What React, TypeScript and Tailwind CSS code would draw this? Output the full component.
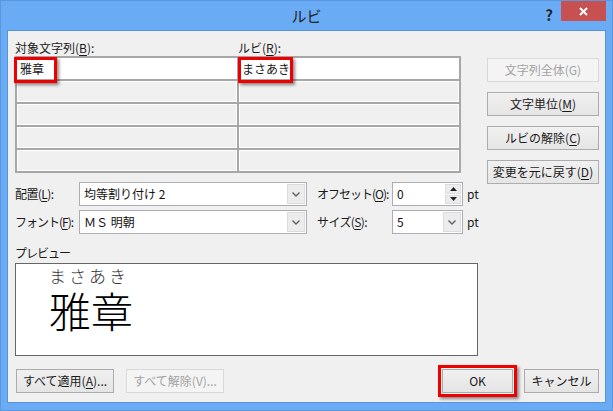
const font = "font-['Noto_Sans_CJK_JP','Noto_Sans',sans-serif]";

const U = ({ c }: { c: string }) => <span className="underline underline-offset-2">{c}</span>;

const Btn = ({
  children,
  disabled,
  className = "",
}: {
  children: React.ReactNode;
  disabled?: boolean;
  className?: string;
}) => (
  <div
    className={`h-[24px] flex items-center justify-center text-[12px] leading-none whitespace-nowrap border ${
      disabled
        ? "border-[#d9d9d9] bg-[#f4f4f4] text-[#a3a3a3]"
        : "border-[#acacac] bg-gradient-to-b from-[#f0f0f0] to-[#e5e5e5] text-[#1a1a1a]"
    } ${className}`}
  >
    {children}
  </div>
);

const Chevron = () => (
  <div className="w-[18px] h-full flex items-center justify-center bg-[#ececec] border border-[#dcdcdc]">
    <svg width="8" height="5" viewBox="0 0 8 5">
      <path d="M0.5 0.5 L4 4 L7.5 0.5" fill="none" stroke="#606060" strokeWidth="1.4" />
    </svg>
  </div>
);

const Combo = ({ value, w }: { value: string; w: string }) => (
  <div className={`${w} shrink-0 h-[24px] bg-white border border-[#abadb3] flex items-stretch p-[1px]`}>
    <div className="flex-1 flex items-center pl-[3px] text-[12px] leading-none text-[#111] whitespace-nowrap">{value}</div>
    <Chevron />
  </div>
);

const Spin = ({ value }: { value: string }) => (
  <div className="w-[71px] shrink-0 h-[24px] bg-white border border-[#abadb3] flex items-stretch p-[1px]">
    <div className="flex-1 flex items-center pl-[3px] text-[12px] leading-none text-[#111]">{value}</div>
    <div className="w-[16px] flex flex-col gap-[1px]">
      <div className="flex-1 flex items-center justify-center bg-[#ececec] border border-[#dcdcdc]">
        <svg width="7" height="4" viewBox="0 0 7 4">
          <path d="M0 4 L3.5 0 L7 4 Z" fill="#222" />
        </svg>
      </div>
      <div className="flex-1 flex items-center justify-center bg-[#ececec] border border-[#dcdcdc]">
        <svg width="7" height="4" viewBox="0 0 7 4">
          <path d="M0 0 L3.5 4 L7 0 Z" fill="#222" />
        </svg>
      </div>
    </div>
  </div>
);

const RedBox = ({ className }: { className: string }) => (
  <div className={`absolute border-[3px] border-[#ee0000] shadow-[2px_2px_3px_rgba(0,0,0,0.45)] ${className}`} />
);

export default function App() {
  const rows = [0, 1, 2, 3, 4];
  return (
    <div className={`w-[613px] h-[411px] bg-[#6aabf5] border border-[#5a97dd] flex flex-col ${font}`}>
      <div className="h-[29px] relative flex items-center justify-center">
        <span className="text-[15px] text-[#222] leading-none">ルビ</span>
        <span className="absolute right-[59px] top-[6px] text-[15px] font-bold text-[#222] leading-none">?</span>
        <div className="absolute right-[6px] top-0 w-[45px] h-[20px] bg-[#c75050] flex items-center justify-center">
          <svg width="9" height="9" viewBox="0 0 9 9">
            <path d="M1 1 L8 8 M8 1 L1 8" stroke="white" strokeWidth="2" />
          </svg>
        </div>
      </div>

      <div className="flex-1 mx-[6px] mb-[7px] bg-[#f0f0f0] border border-[#5b93d6] flex flex-col pl-[7px] pr-[6px] pt-[9px] text-[#1a1a1a]">
        <div className="flex">
          <div className="w-[472px] flex flex-col">
            <div className="flex h-[16px] items-center text-[12px] leading-none">
              <div className="w-[223px]">
                対象文字列(<U c="B" />):
              </div>
              <div>
                ルビ(<U c="R" />):
              </div>
            </div>
            <div className="w-[446px] border-2 border-[#a7a7a7] bg-[#a7a7a7] grid grid-cols-[220px_1fr] gap-[2px]">
              {rows.map((r) =>
                [0, 1].map((c) =>
                  r === 0 ? (
                    <div key={`${r}-${c}`} className="relative h-[21px] bg-white flex items-center pl-[3px] text-[12px] leading-none">
                      {c === 0 ? "雅章" : "まさあき"}
                      {c === 0 ? (
                        <RedBox className="-left-[3px] -top-[1px] w-[43px] h-[26px]" />
                      ) : (
                        <RedBox className="-left-[1px] -top-[1px] w-[55px] h-[26px]" />
                      )}
                    </div>
                  ) : (
                    <div key={`${r}-${c}`} className="h-[21px] bg-[#f0f0f0] border border-white" />
                  )
                )
              )}
            </div>

            <div className="flex items-center mt-[9px] text-[12px] leading-none whitespace-nowrap">
              <div className="w-[64px] shrink-0 tracking-[-0.6px]">
                配置(<U c="L" />):
              </div>
              <Combo value="均等割り付け 2" w="w-[228px]" />
              <div className="w-[75px] shrink-0 ml-[10px] tracking-[-1px]">
                オフセット(<U c="O" />):
              </div>
              <Spin value="0" />
              <div className="ml-[4px]">pt</div>
            </div>
            <div className="flex items-center mt-[4px] text-[12px] leading-none whitespace-nowrap">
              <div className="w-[64px] shrink-0 tracking-[-1px]">
                フォント(<U c="F" />):
              </div>
              <Combo value="ＭＳ 明朝" w="w-[228px]" />
              <div className="w-[75px] shrink-0 ml-[10px] tracking-[-0.6px]">
                サイズ(<U c="S" />):
              </div>
              <div className="w-[71px] shrink-0 h-[24px] bg-white border border-[#abadb3] flex items-stretch p-[1px]">
                <div className="flex-1 flex items-center pl-[3px] text-[12px] leading-none text-[#111]">5</div>
                <Chevron />
              </div>
              <div className="ml-[4px]">pt</div>
            </div>
          </div>

          <div className="w-[112px] mt-[18px] flex flex-col gap-[10px]">
            <Btn disabled>文字列全体(G)</Btn>
            <Btn>
              文字単位(<U c="M" />)
            </Btn>
            <Btn>
              ルビの解除(<U c="C" />)
            </Btn>
            <Btn>
              変更を元に戻す(<U c="D" />)
            </Btn>
          </div>
        </div>

        <div className="mt-[11px] h-[16px] flex items-center text-[12px] leading-none tracking-[-1px]">プレビュー</div>
        <div className="mt-[2px] w-[463px] h-[93px] bg-white border border-[#666666] pl-[33px] pt-0">
          <div className="inline-flex flex-col items-start">
            <div className="text-[17px] leading-[18px] tracking-[3px] font-light text-[#333]">まさあき</div>
            <div className="text-[42px] leading-[42px] font-light text-black mt-[4px]">雅章</div>
          </div>
        </div>

        <div className="mt-[13px] flex items-center text-[12px]">
          <Btn className="w-[98px] ml-[1px]">
            すべて適用(<U c="A" />)...
          </Btn>
          <Btn disabled className="w-[98px] ml-[12px]">
            すべて解除(V)...
          </Btn>
          <div className="flex-1" />
          <div className="relative w-[71px]">
            <Btn>OK</Btn>
            <RedBox className="-left-[4px] -right-[4px] -top-[4px] -bottom-[4px]" />
          </div>
          <Btn className="w-[75px] ml-[11px]">キャンセル</Btn>
        </div>
      </div>
    </div>
  );
}
